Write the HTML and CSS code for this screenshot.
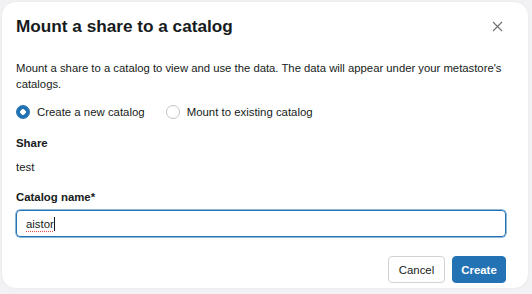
FILE: index.html
```html
<!DOCTYPE html>
<html>
<head>
    <title>Mount a share to a catalog</title>
    <link rel="stylesheet" href="styles.css">
</head>
<body>
    <div class="modal">
        <div class="modal-header">
            <h2 class="modal-title">Mount a share to a catalog</h2>
            <button class="close-btn" aria-label="Close">
                <svg width="11" height="11" viewBox="0 0 11 11">
                    <path d="M1 1L10 10M10 1L1 10" stroke="#6f6f6f" stroke-width="1.1" fill="none"/>
                </svg>
            </button>
        </div>

        <p class="description">Mount a share to a catalog to view and use the data. The data will appear under your metastore's catalogs.</p>

        <div class="radio-group">
            <label class="radio-option">
                <span class="radio checked"></span>
                Create a new catalog
            </label>
            <label class="radio-option">
                <span class="radio"></span>
                Mount to existing catalog
            </label>
        </div>

        <div class="field-label share-label">Share</div>
        <div class="field-value">test</div>

        <div class="field-label catalog-label">Catalog name*</div>
        <div class="text-input"><span class="misspelled">aistor</span><span class="caret"></span></div>

        <div class="modal-footer">
            <button class="btn btn-default">Cancel</button>
            <button class="btn btn-primary">Create</button>
        </div>
    </div>
</body>
</html>
```

FILE: styles.css
```css
body {
    margin: 0;
    background-color: #f2f2f4;
    font-family: "Liberation Sans", Arial, sans-serif;
    color: #161b20;
}
.modal {
    margin: 2px;
    width: 526px;
    height: 286px;
    box-sizing: border-box;
    padding: 12px 22px 0 14px;
    background-color: #ffffff;
    border-radius: 14px;
    box-shadow: 0 0 2px rgba(0, 0, 0, 0.08);
}
.modal-header {
    display: flex;
    justify-content: space-between;
    align-items: center;
}
.modal-title {
    margin: 0;
    font-size: 17.2px;
    line-height: 24px;
    font-weight: 600;
}
.close-btn {
    border: none;
    background: none;
    padding: 0;
    margin-right: 3px;
    width: 11px;
    height: 11px;
    display: flex;
}
.description {
    margin: 22px 0 0 0;
    font-size: 11.3px;
    line-height: 16px;
}
.radio-group {
    display: flex;
    gap: 21px;
    margin-top: 12px;
    font-size: 11.4px;
    line-height: 16px;
}
.radio-option {
    display: flex;
    align-items: center;
    gap: 7px;
}
.radio {
    width: 14px;
    height: 14px;
    box-sizing: border-box;
    border: 1px solid #c4c4c4;
    border-radius: 50%;
}
.radio.checked {
    border-color: #2272b4;
    background: radial-gradient(circle, #ffffff 0 2.5px, #2272b4 3px);
}
.field-label {
    font-size: 11.4px;
    line-height: 16px;
    font-weight: 700;
}
.share-label {
    margin-top: 15px;
}
.catalog-label {
    margin-top: 14px;
}
.field-value {
    margin-top: 8px;
    font-size: 11.4px;
    line-height: 16px;
}
.text-input {
    margin-top: 5px;
    height: 27px;
    box-sizing: border-box;
    border: 1px solid #2272b4;
    border-radius: 4px;
    box-shadow: 0 0 0 0.5px #2272b4;
    padding: 0 9px;
    display: flex;
    align-items: center;
    font-size: 11.4px;
}
.misspelled {
    text-decoration: underline dotted #e05050;
    text-underline-offset: 3px;
}
.caret {
    width: 1px;
    height: 14px;
    background-color: #161b20;
}
.modal-footer {
    display: flex;
    justify-content: flex-end;
    gap: 7px;
    margin-top: 19px;
}
.btn {
    height: 27px;
    padding: 0;
    font-family: inherit;
    font-size: 11.4px;
    border-radius: 4px;
    cursor: pointer;
}
.btn-default {
    width: 57px;
    background-color: #ffffff;
    border: 1px solid #cfd3d6;
    color: #161b20;
}
.btn-primary {
    width: 54px;
    background-color: #2272b4;
    border: 1px solid #2272b4;
    color: #ffffff;
    font-weight: 600;
}
```
